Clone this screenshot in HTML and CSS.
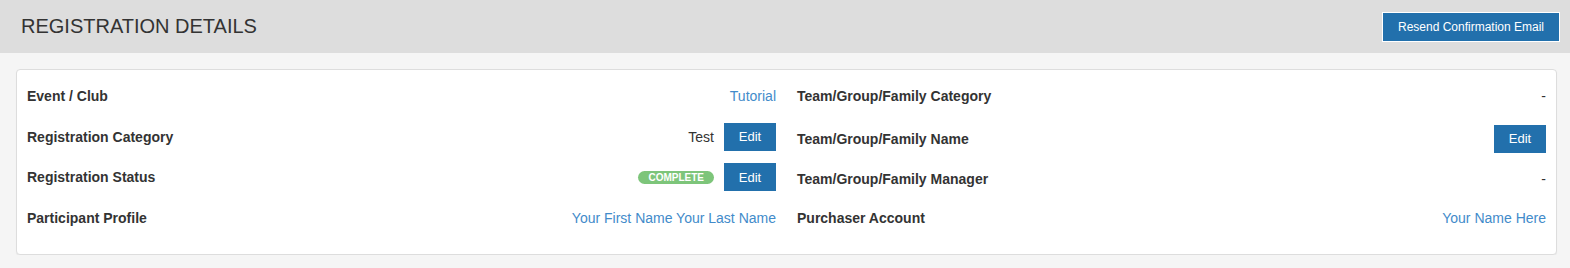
FILE: index.html
```html
<!DOCTYPE html>
<html>

<head>
    <title>Registration Details</title>
    <link rel="stylesheet" href="styles.css">
</head>

<body>
    <!-- Page header -->
    <div class="page-header">
        <h1>REGISTRATION DETAILS</h1>
        <button class="btn btn-header">Resend Confirmation Email</button>
    </div>

    <div class="panel">
        <div class="column">
            <div class="row">
                <span class="label">Event / Club</span>
                <a class="value link" href="#">Tutorial</a>
            </div>
            <div class="row">
                <span class="label">Registration Category</span>
                <span class="value">Test <button class="btn">Edit</button></span>
            </div>
            <div class="row">
                <span class="label">Registration Status</span>
                <span class="value"><span class="badge">COMPLETE</span> <button class="btn">Edit</button></span>
            </div>
            <div class="row">
                <span class="label">Participant Profile</span>
                <a class="value link" href="#">Your First Name Your Last Name</a>
            </div>
        </div>
        <div class="column">
            <div class="row">
                <span class="label">Team/Group/Family Category</span>
                <span class="value">-</span>
            </div>
            <div class="row row-low">
                <span class="label">Team/Group/Family Name</span>
                <span class="value"><button class="btn">Edit</button></span>
            </div>
            <div class="row row-low">
                <span class="label">Team/Group/Family Manager</span>
                <span class="value">-</span>
            </div>
            <div class="row">
                <span class="label">Purchaser Account</span>
                <a class="value link" href="#">Your Name Here</a>
            </div>
        </div>
    </div>
</body>

</html>
```

FILE: styles.css
```css
body {
    font-family: 'Liberation Sans', Arial, sans-serif;
    margin: 0;
    background-color: #f5f5f5;
    color: #333;
    font-size: 14px;
}

.page-header {
    display: flex;
    justify-content: space-between;
    align-items: center;
    height: 53px;
    background-color: #dddddd;
    padding: 0 10px 0 21px;
}

.page-header h1 {
    margin: 0;
    font-size: 20px;
    font-weight: normal;
    color: #333;
    padding-bottom: 1px;
}

.btn {
    background-color: #2270ac;
    color: #fff;
    border: none;
    font-family: 'Liberation Sans', Arial, sans-serif;
    font-size: 13px;
    width: 52px;
    height: 28px;
    padding: 0;
    cursor: pointer;
}

.btn-header {
    width: 178px;
    height: 30px;
    border: 1px solid #fff;
    font-size: 12px;
}

.panel {
    display: grid;
    grid-template-columns: 1fr 1fr;
    column-gap: 21px;
    margin: 16px 13px 0 16px;
    padding: 12px 10px 22px 10px;
    background-color: #fff;
    border: 1px solid #ddd;
    border-radius: 4px;
    box-shadow: 0 1px 1px rgba(0, 0, 0, 0.05);
}

.row {
    display: flex;
    justify-content: space-between;
    align-items: center;
    height: 28px;
    margin-bottom: 12.67px;
}

.row:last-child {
    margin-bottom: 0;
}

.label {
    font-weight: bold;
}

.value {
    display: flex;
    align-items: center;
    gap: 10px;
}

.link {
    color: #428bca;
    text-decoration: none;
}

.badge {
    display: inline-block;
    background-color: #7dc57a;
    color: #fff;
    font-size: 10px;
    font-weight: bold;
    line-height: 13px;
    padding: 0 10px;
    border-radius: 7px;
}

.row-low {
    position: relative;
    top: 2px;
}
```
